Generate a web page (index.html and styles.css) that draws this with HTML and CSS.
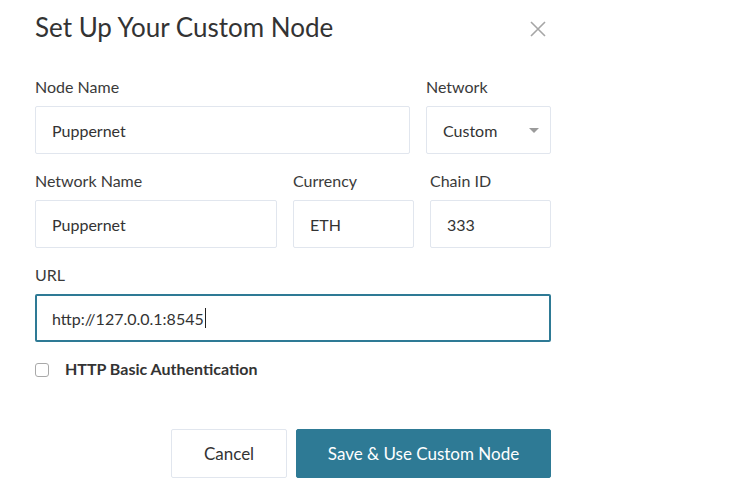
FILE: index.html
```html
<!DOCTYPE html>
<html lang="en">
<head>
<meta charset="utf-8">
<title>Set Up Your Custom Node</title>
<link rel="stylesheet" href="styles.css">
</head>
<body>
<div class="modal">
  <div class="header">
    <h1 class="title">Set Up Your Custom Node</h1>
    <button class="close" aria-label="Close">
      <svg width="16" height="16" viewBox="0 0 16 16"><path d="M1 1 L15 15 M15 1 L1 15" stroke="#a6a6a6" stroke-width="1.6" fill="none"/></svg>
    </button>
  </div>
  <div class="row">
    <div class="field grow">
      <label class="label">Node Name</label>
      <div class="input">Puppernet</div>
    </div>
    <div class="field w125">
      <label class="label">Network</label>
      <div class="input select">Custom<span class="caret"></span></div>
    </div>
  </div>
  <div class="row">
    <div class="field grow">
      <label class="label">Network Name</label>
      <div class="input">Puppernet</div>
    </div>
    <div class="field w121">
      <label class="label">Currency</label>
      <div class="input">ETH</div>
    </div>
    <div class="field w121">
      <label class="label">Chain ID</label>
      <div class="input">333</div>
    </div>
  </div>
  <div class="row">
    <div class="field grow">
      <label class="label">URL</label>
      <div class="input focused">http://127.0.0.1:8545<span class="cursor"></span></div>
    </div>
  </div>
  <div class="check-row">
    <span class="checkbox"></span>
    <span class="check-label">HTTP Basic Authentication</span>
  </div>
  <div class="actions">
    <button class="btn btn-cancel">Cancel</button>
    <button class="btn btn-primary">Save &amp; Use Custom Node</button>
  </div>
</div>
</body>
</html>
```
FILE: styles.css
```css
* { box-sizing: border-box; }
html, body { margin: 0; padding: 0; background: #fff; }
body { font-family: Lato, "Open Sans", sans-serif; color: #333; }
.modal { width: 516px; margin-left: 35px; padding-top: 11px; }
.header { display: flex; justify-content: space-between; align-items: flex-start; }
.title { margin: 0; font-size: 26px; line-height: 32px; font-weight: 400; color: #333; }
.close { border: 0; background: none; padding: 0; margin: 10px 5px 0 0; width: 16px; height: 16px; display: block; }
.close svg { display: block; }
.row { display: flex; gap: 16px; margin-top: 18px; }
.header + .row { margin-top: 35px; }
.field { display: flex; flex-direction: column; }
.grow { flex: 1; }
.w125 { width: 125px; }
.w121 { width: 121px; }
.label { font-size: 16px; line-height: 18px; margin-bottom: 10px; color: #3a3a3a; }
.input { height: 48px; border: 1px solid #e1e6ee; border-radius: 2px; padding: 0 16px; font-size: 16px; color: #333; display: flex; align-items: center; }
.select { justify-content: space-between; padding-right: 11px; }
.caret { width: 0; height: 0; border-left: 5px solid transparent; border-right: 5px solid transparent; border-top: 5px solid #9b9b9b; }
.focused { border: 2px solid #2e7a95; padding-left: 15px; }
.cursor { display: inline-block; width: 1px; height: 20px; background: #222; margin-left: 1px; }
.check-row { display: flex; align-items: center; margin-top: 16px; height: 20px; }
.checkbox { width: 14px; height: 14px; border: 1px solid #a9a9a9; border-radius: 3px; margin-top: 4px; margin-right: 16px; }
.check-label { font-size: 16px; font-weight: 700; color: #333; }
.actions { display: flex; justify-content: flex-end; gap: 9px; margin-top: 51px; }
.btn { height: 49px; border-radius: 2px; font-family: Lato, "Open Sans", sans-serif; font-size: 17px; cursor: pointer; }
.btn-cancel { width: 116px; background: #fff; border: 1px solid #e1e6ee; color: #333; }
.btn-primary { width: 255px; background: #2e7a95; border: 1px solid #2e7a95; color: #fff; }
```
